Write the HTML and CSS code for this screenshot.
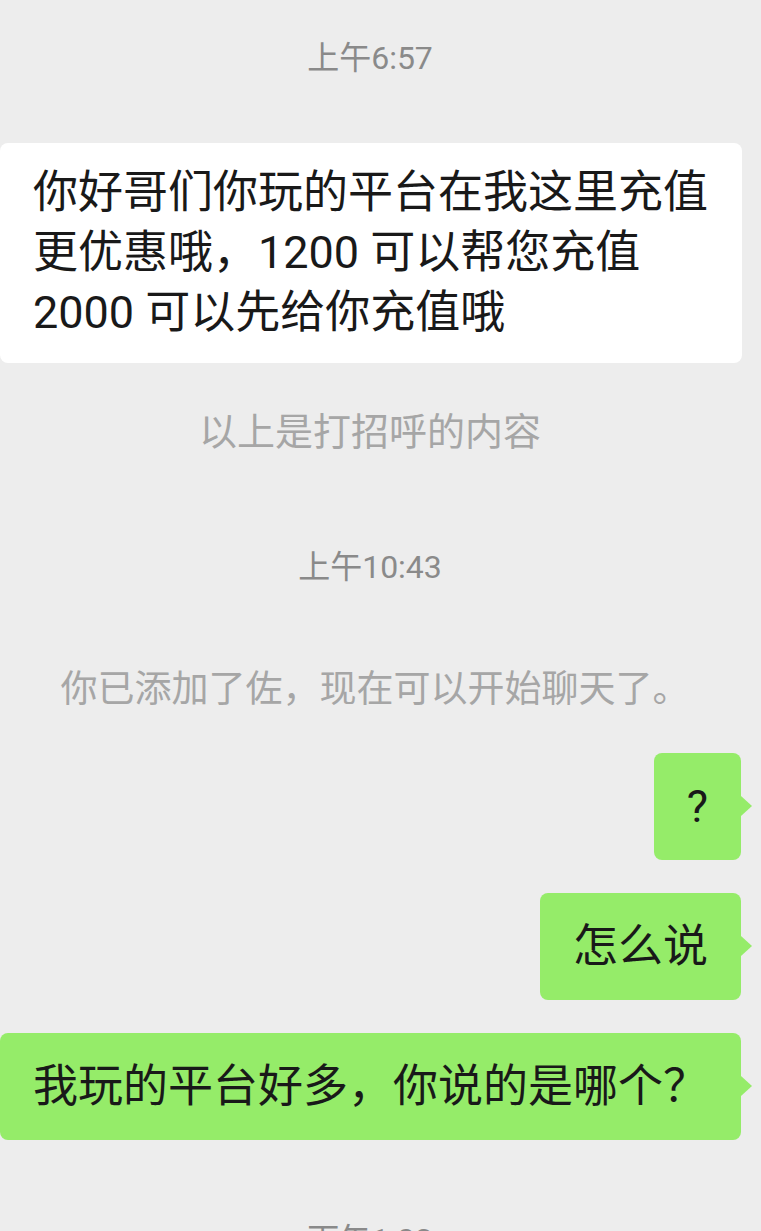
FILE: index.html
```html
<!DOCTYPE html>
<html lang="zh-CN">
<head>
  <meta charset="UTF-8" />
  <title>聊天</title>
  <link rel="stylesheet" href="styles.css">
</head>
<body>
  <div class="chat">
    <div class="time">上午6:57</div>

    <div class="row left first">
      <div class="bubble white">你好哥们你玩的平台在我这里充值<br>更优惠哦，1200 可以帮您充值<br>2000 可以先给你充值哦</div>
    </div>

    <div class="sys sys-greet">以上是打招呼的内容</div>

    <div class="time time-2">上午10:43</div>

    <div class="sys sys-added">你已添加了佐，现在可以开始聊天了。</div>

    <div class="row right q">
      <div class="bubble green">?</div>
    </div>
    <div class="row right">
      <div class="bubble green">怎么说</div>
    </div>
    <div class="row right">
      <div class="bubble green">我玩的平台好多，你说的是哪个？</div>
    </div>

    <div class="time time-3">下午1:02</div>
  </div>
</body>
</html>
```

FILE: styles.css
```css
html, body { margin: 0; }
body {
  background: #ededed;
  font-family: Roboto, "Noto Sans CJK SC", sans-serif;
  color: #191919;
  height: 1231px;
  overflow: hidden;
}
.chat {
  display: flex;
  flex-direction: column;
  padding-top: 38px;
}
.time, .sys {
  text-align: center;
  padding-right: 21px;
}
.time {
  font-size: 32px;
  line-height: 40px;
  color: #8a8a8a;
}
.time-2 { margin-top: 93px; }
.time-3 { margin-top: 80px; }

.sys {
  font-size: 38px;
  line-height: 44px;
  color: #a6a6a6;
}
.sys-greet { margin-top: 47px; }
.sys-added {
  margin-top: 81px;
  font-size: 37px;
  padding-right: 11px;
}

.row { display: flex; margin-top: 33px; }
.row.first { margin-top: 65px; }
.row.q { margin-top: 41px; }
.row.left { justify-content: flex-start; }
.row.right { justify-content: flex-end; padding-right: 20px; }

.bubble {
  position: relative;
  font-size: 45px;
  line-height: 60px;
  padding: 24px 33px 23px;
  border-radius: 8px;
  white-space: nowrap;
}
.bubble.white {
  background: #fff;
  padding: 20px 33px;
  width: 676px;
}
.bubble.green { background: #95ec69; }
.bubble.green::after {
  content: "";
  position: absolute;
  right: -11px;
  top: 43px;
  border-left: 11px solid #95ec69;
  border-top: 10px solid transparent;
  border-bottom: 10px solid transparent;
}
```
